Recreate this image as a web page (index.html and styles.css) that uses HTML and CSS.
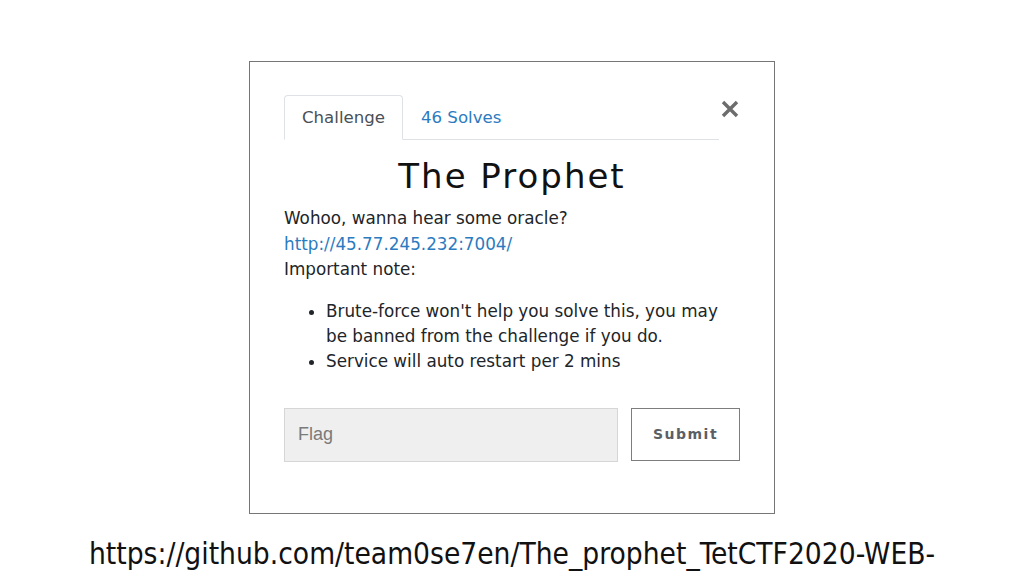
FILE: index.html
```html
<!DOCTYPE html>
<html lang="en">
<head>
<meta charset="utf-8">
<title>The Prophet</title>
<link rel="stylesheet" href="styles.css">
</head>
<body>
<div class="page">
  <div class="modal">
    <div class="modal-head">
      <nav class="tabs">
        <span class="tab active">Challenge</span>
        <span class="tab link">46 Solves</span>
      </nav>
      <svg class="close" width="18" height="18" viewBox="0 0 18 18" aria-label="Close">
        <path d="M2 2 L16 16 M16 2 L2 16" stroke="#6d6d6d" stroke-width="3.4" stroke-linecap="butt"/>
      </svg>
    </div>
    <h1 class="title">The Prophet</h1>
    <p class="desc">Wohoo, wanna hear some oracle?<br><a class="url" href="#">http://45.77.245.232:7004/</a><br>Important note:</p>
    <ul class="notes">
      <li>Brute-force won't help you solve this, you may be banned from the challenge if you do.</li>
      <li>Service will auto restart per 2 mins</li>
    </ul>
    <div class="flag-row">
      <input class="flag" type="text" placeholder="Flag">
      <button class="submit" type="button">Submit</button>
    </div>
  </div>
  <p class="caption">https://github.com/team0se7en/The_prophet_TetCTF2020-WEB-</p>
</div>
</body>
</html>
```
FILE: styles.css
```css
html, body {
  margin: 0;
  padding: 0;
  background: #fff;
}
.page {
  width: 1024px;
  height: 576px;
  overflow: hidden;
  display: flex;
  flex-direction: column;
  align-items: center;
  padding-top: 61px;
  box-sizing: border-box;
}
.modal {
  width: 526px;
  height: 453px;
  box-sizing: border-box;
  border: 1px solid #767676;
  padding: 33px 34px 0 34px;
  font-family: "DejaVu Sans", sans-serif;
  color: #212529;
}
.modal-head {
  display: flex;
  align-items: flex-start;
}
.tabs {
  display: flex;
  width: 435px;
  border-bottom: 1px solid #dee2e6;
}
.tab {
  font-size: 16.6px;
  line-height: 24px;
  padding: 10px 17px 9px;
  border: 1px solid transparent;
  border-radius: 4px 4px 0 0;
  margin-bottom: -1px;
}
.tab.active {
  color: #495057;
  border-color: #dee2e6 #dee2e6 #fff;
  background: #fff;
}
.tab.link {
  color: #2b7bc0;
}
.close {
  margin-left: auto;
  margin-right: 1px;
  margin-top: 5px;
}
.title {
  margin: 16px 0 0;
  font-size: 34px;
  line-height: 40px;
  font-weight: normal;
  letter-spacing: 2px;
  text-align: center;
  color: #111;
}
.desc {
  margin: 10px 0 0;
  font-size: 16.8px;
  line-height: 25.5px;
}
.url {
  color: #2b7bc0;
  text-decoration: none;
}
.notes {
  margin: 16px 0 0;
  padding-left: 42px;
  font-size: 16.8px;
  line-height: 25.4px;
}
.flag-row {
  display: flex;
  align-items: flex-start;
  gap: 13px;
  margin-top: 33px;
}
.flag {
  width: 334px;
  height: 54px;
  box-sizing: border-box;
  margin: 0;
  background: #efefef;
  border: 1px solid #d6d6d6;
  padding: 0 13px;
  font-family: "Liberation Sans", Arial, sans-serif;
  font-size: 18px;
  color: #333;
  outline: none;
}
.flag::placeholder {
  color: #7a7a7a;
}
.submit {
  width: 109px;
  height: 53px;
  box-sizing: border-box;
  margin: 0;
  background: #fff;
  border: 1px solid #7d7d7d;
  border-radius: 0;
  font-family: "DejaVu Sans", sans-serif;
  font-weight: bold;
  font-size: 14px;
  letter-spacing: 1.5px;
  color: #5a5f66;
  padding: 0;
}
.caption {
  margin: 22px 0 0;
  font-family: "DejaVu Sans Condensed", "DejaVu Sans", sans-serif;
  font-stretch: condensed;
  font-size: 29.6px;
  line-height: 36px;
  color: #111;
  white-space: nowrap;
}
```
